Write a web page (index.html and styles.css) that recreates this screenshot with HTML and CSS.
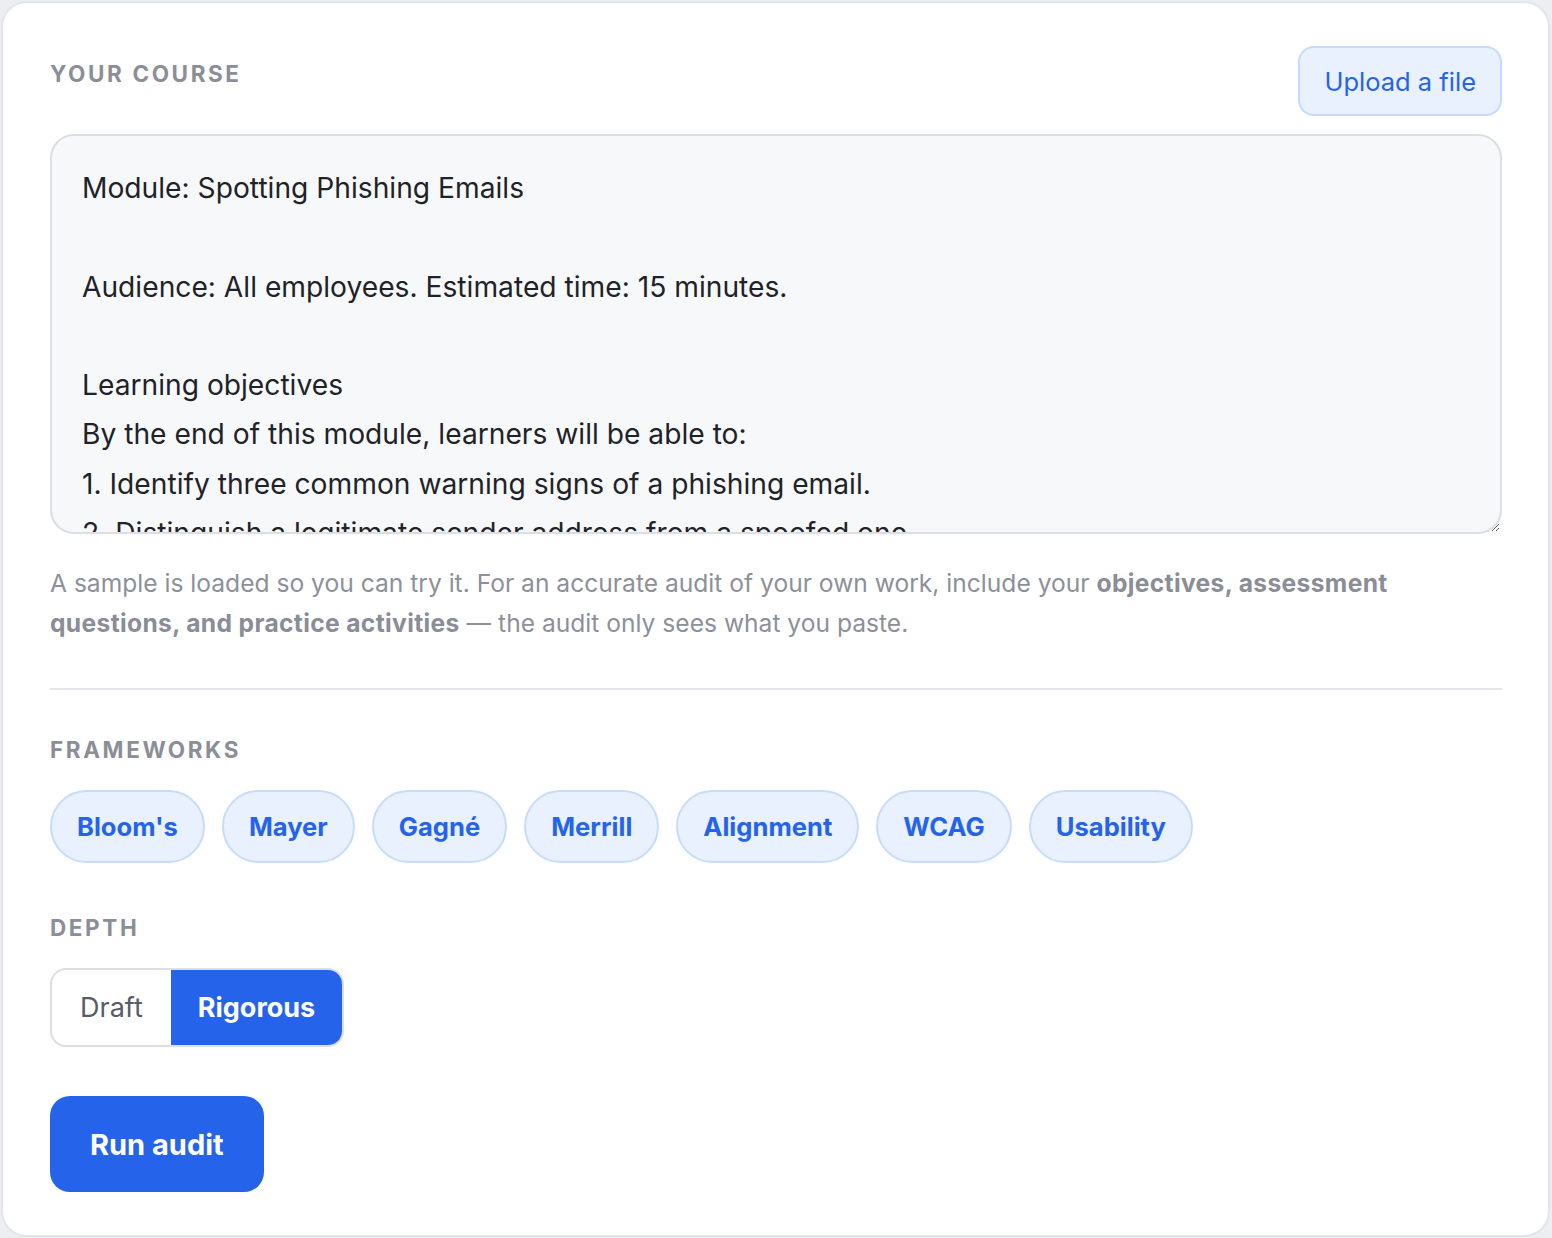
FILE: index.html
```html
<!DOCTYPE html>
<html lang="en">
<head>
<meta charset="utf-8">
<title>Course audit</title>
<link rel="stylesheet" href="styles.css">
</head>
<body>
<main class="card">
  <div class="head">
    <div class="label label-top">Your course</div>
    <button class="upload" type="button">Upload a file</button>
  </div>
  <textarea class="course" spellcheck="false">Module: Spotting Phishing Emails

Audience: All employees. Estimated time: 15 minutes.

Learning objectives
By the end of this module, learners will be able to:
1. Identify three common warning signs of a phishing email.
2. Distinguish a legitimate sender address from a spoofed one.
3. Report a suspected phishing email using the correct process.

Assessment
Q1. Which of these is a common sign of a phishing email?</textarea>
  <p class="hint">A sample is loaded so you can try it. For an accurate audit of your own work, include your <strong>objectives, assessment questions, and practice activities</strong> — the audit only sees what you paste.</p>
  <hr class="divider">
  <div class="label">Frameworks</div>
  <div class="chips">
    <button class="chip" type="button">Bloom's</button>
    <button class="chip" type="button">Mayer</button>
    <button class="chip" type="button">Gagné</button>
    <button class="chip" type="button">Merrill</button>
    <button class="chip" type="button">Alignment</button>
    <button class="chip" type="button">WCAG</button>
    <button class="chip" type="button">Usability</button>
  </div>
  <div class="label label-depth">Depth</div>
  <div class="seg">
    <button class="seg-btn" type="button">Draft</button>
    <button class="seg-btn seg-on" type="button">Rigorous</button>
  </div>
  <div class="actions">
    <button class="run" type="button">Run audit</button>
  </div>
</main>
</body>
</html>
```

FILE: styles.css
```css
* { box-sizing: border-box; }
html, body {
  margin: 0;
  padding: 0;
  background: #eceef1;
}
body {
  font-family: Inter, "Noto Sans", "Liberation Sans", sans-serif;
  color: #1f2328;
}
.card {
  width: 1549px;
  height: 1236px;
  margin: 1px 0 0 1px;
  background: #ffffff;
  border: 2px solid #e3e5ea;
  border-radius: 26px;
  padding: 43px 46px 0 47px;
  display: flex;
  flex-direction: column;
  align-items: flex-start;
}
button {
  font-family: inherit;
  cursor: pointer;
}
.head {
  width: 100%;
  display: flex;
  justify-content: space-between;
  align-items: flex-start;
}
.label {
  font-size: 22.5px;
  line-height: 33px;
  font-weight: 700;
  letter-spacing: 2.6px;
  text-transform: uppercase;
  color: #8b8e97;
  margin-top: 43px;
}
.label-top { margin-top: 11px; }
.label-depth { margin-top: 48px; }
.upload {
  height: 70px;
  padding: 0 24px;
  border: 2px solid #c8dafb;
  background: #e9f1fe;
  color: #2563eb;
  border-radius: 16px;
  font-size: 25.5px;
  font-weight: 400;
}
.course {
  display: block;
  width: 100%;
  height: 400px;
  margin-top: 18px;
  padding: 28px 30px;
  border: 2px solid #dcdee4;
  border-radius: 24px;
  background: #f7f8fa;
  font-family: inherit;
  font-size: 28.2px;
  line-height: 49.3px;
  color: #1f2328;
  resize: vertical;
  overflow: hidden;
  outline: none;
}
.hint {
  margin: 29px 0 0;
  font-size: 24.6px;
  line-height: 40px;
  color: #8d9099;
}
.hint strong {
  font-weight: 700;
  letter-spacing: 0.35px;
  color: #8a8d96;
}
.divider {
  width: 100%;
  margin: 45px 0 0;
  border: 0;
  height: 2px;
  background: #e6e7eb;
}
.chips {
  display: flex;
  gap: 17px;
  margin-top: 24px;
}
.chip {
  height: 73px;
  padding: 0 25px;
  border: 2px solid #c9dbfb;
  background: #e9f1fe;
  color: #2563eb;
  border-radius: 999px;
  font-size: 25.6px;
  font-weight: 700;
}
.seg {
  display: flex;
  margin-top: 24px;
  height: 79px;
  border: 2px solid #dcdee4;
  border-radius: 16px;
  overflow: hidden;
  background: #ffffff;
}
.seg-btn {
  border: 0;
  background: transparent;
  padding: 0 28px;
  font-size: 27px;
  font-weight: 400;
  color: #565b66;
}
.seg-on {
  background: #2563eb;
  color: #ffffff;
  font-weight: 700;
  padding: 0 27px;
}
.actions {
  margin-top: 49px;
}
.run {
  height: 96px;
  padding: 0 40px;
  border: 0;
  border-radius: 20px;
  background: #2563eb;
  color: #ffffff;
  font-size: 29px;
  font-weight: 700;
}
```
